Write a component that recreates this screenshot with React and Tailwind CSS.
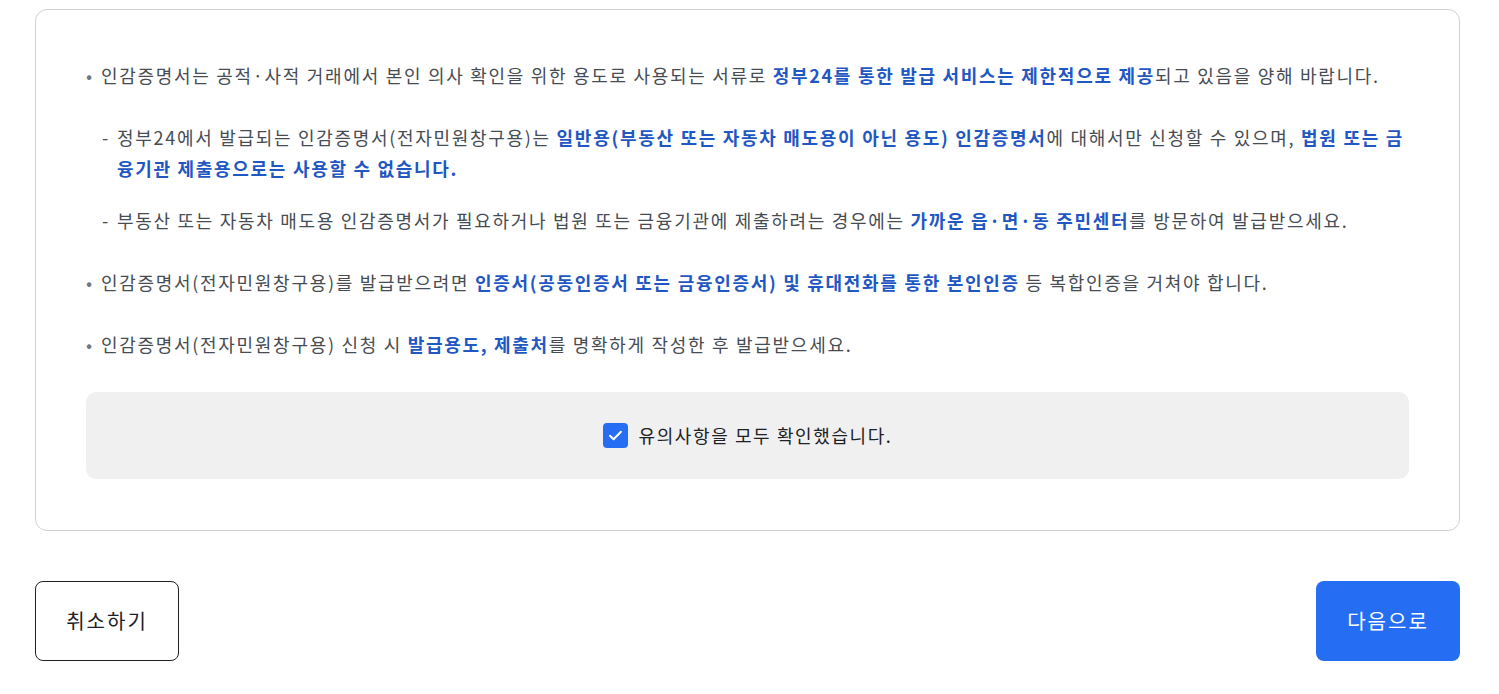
import React, { useState } from 'react';

const font = { fontFamily: '"Noto Sans CJK KR", "Noto Sans", sans-serif' };

function B({ children }) {
  return <strong className="font-bold text-[#1f57c3]">{children}</strong>;
}

function Bullet({ children, sub }) {
  return (
    <li className="flex">
      <span className="w-[15px] shrink-0 tracking-normal text-[#6d7882]">•</span>
      <div className="flex-1">
        {children}
        {sub && <ul className="mt-[31px] flex flex-col gap-[21px]">{sub}</ul>}
      </div>
    </li>
  );
}

function Dash({ children }) {
  return (
    <li className="flex">
      <span className="w-[16px] shrink-0 pl-[1px] tracking-normal">-</span>
      <div className="flex-1">{children}</div>
    </li>
  );
}

export default function App() {
  const [checked, setChecked] = useState(true);

  return (
    <div className="min-h-screen bg-white pt-[9px] pl-[35px] pr-[39px]" style={font}>
      <div className="rounded-[12px] border border-[#cdd1d5] px-[50px] pt-[50px] pb-[51px]">
        <ul className="flex flex-col gap-[31px] text-[18px] leading-[31px] tracking-[1.7px] text-[#464c53]">
          <Bullet
            sub={
              <>
                <Dash>
                  정부24에서 발급되는 인감증명서(전자민원창구용)는{' '}
                  <B>일반용(부동산 또는 자동차 매도용이 아닌 용도) 인감증명서</B>에 대해서만 신청할 수 있으며,{' '}
                  <B>법원 또는 금융기관 제출용으로는 사용할 수 없습니다.</B>
                </Dash>
                <Dash>
                  부동산 또는 자동차 매도용 인감증명서가 필요하거나 법원 또는 금융기관에 제출하려는 경우에는{' '}
                  <B>가까운 읍·면·동 주민센터</B>를 방문하여 발급받으세요.
                </Dash>
              </>
            }
          >
            인감증명서는 공적·사적 거래에서 본인 의사 확인을 위한 용도로 사용되는 서류로{' '}
            <B>정부24를 통한 발급 서비스는 제한적으로 제공</B>되고 있음을 양해 바랍니다.
          </Bullet>
          <Bullet>
            인감증명서(전자민원창구용)를 발급받으려면{' '}
            <B>인증서(공동인증서 또는 금융인증서) 및 휴대전화를 통한 본인인증</B> 등 복합인증을 거쳐야 합니다.
          </Bullet>
          <Bullet>
            인감증명서(전자민원창구용) 신청 시 <B>발급용도, 제출처</B>를 명확하게 작성한 후 발급받으세요.
          </Bullet>
        </ul>

        <div className="mt-[32px] flex h-[87px] items-center justify-center rounded-[10px] bg-[#f0f0f0]">
          <label className="flex cursor-pointer items-center gap-[11px] text-[18px] tracking-[1.6px] text-[#1e2124]">
            <button
              type="button"
              onClick={() => setChecked(!checked)}
              className={`flex h-[25px] w-[25px] items-center justify-center rounded-[4px] ${
                checked ? 'bg-[#256ef4]' : 'border border-[#8a949e] bg-white'
              }`}
            >
              {checked && (
                <svg width="19" height="19" viewBox="0 0 16 16" fill="none">
                  <path d="M3.4 8.2l3 3 6.2-6.3" stroke="white" strokeWidth="1.7" strokeLinecap="round" strokeLinejoin="round" />
                </svg>
              )}
            </button>
            유의사항을 모두 확인했습니다.
          </label>
        </div>
      </div>

      <div className="mt-[50px] flex justify-between">
        <button className="h-[80px] w-[144px] rounded-[8px] border border-[#1e2124] bg-white text-[20px] tracking-[2px] text-[#1e2124]">
          취소하기
        </button>
        <button className="h-[80px] w-[144px] rounded-[8px] bg-[#256ef4] text-[20px] tracking-[2px] text-white">
          다음으로
        </button>
      </div>
    </div>
  );
}
